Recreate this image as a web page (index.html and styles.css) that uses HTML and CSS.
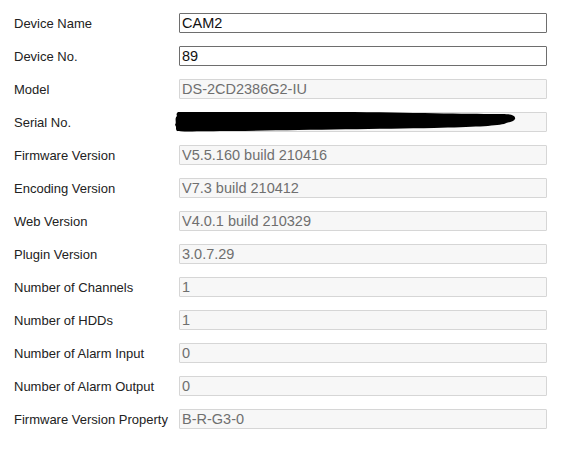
FILE: index.html
```html
<!DOCTYPE html>
<html>
<head>
<meta charset="utf-8">
<link rel="stylesheet" href="styles.css">
</head>
<body>
<div class="form">
  <div class="row"><span class="label">Device Name</span><div class="field"><input class="inp" value="CAM2"></div></div>
  <div class="row"><span class="label">Device No.</span><div class="field"><input class="inp" value="89"></div></div>
  <div class="row"><span class="label">Model</span><div class="field"><input class="inp" value="DS-2CD2386G2-IU" disabled></div></div>
  <div class="row"><span class="label">Serial No.</span><div class="field"><input class="inp" value="" disabled>
    <svg class="redact" width="345" height="22" viewBox="0 0 345 22"><path d="M4 1 L180 1 C250 2 300 3 328 3 C338 3 342 5 341 8 C340 11 334 11 330 13 C320 15 300 16 260 17 C200 18 120 19 60 20 C30 20 10 21 3 20 C1 18 3 16 1 14 C3 11 0 8 3 5 C2 3 3 2 4 1 Z" fill="#000"/></svg>
  </div></div>
  <div class="row"><span class="label">Firmware Version</span><div class="field"><input class="inp" value="V5.5.160 build 210416" disabled></div></div>
  <div class="row"><span class="label">Encoding Version</span><div class="field"><input class="inp" value="V7.3 build 210412" disabled></div></div>
  <div class="row"><span class="label">Web Version</span><div class="field"><input class="inp" value="V4.0.1 build 210329" disabled></div></div>
  <div class="row"><span class="label">Plugin Version</span><div class="field"><input class="inp" value="3.0.7.29" disabled></div></div>
  <div class="row"><span class="label">Number of Channels</span><div class="field"><input class="inp" value="1" disabled></div></div>
  <div class="row"><span class="label">Number of HDDs</span><div class="field"><input class="inp" value="1" disabled></div></div>
  <div class="row"><span class="label">Number of Alarm Input</span><div class="field"><input class="inp" value="0" disabled></div></div>
  <div class="row"><span class="label">Number of Alarm Output</span><div class="field"><input class="inp" value="0" disabled></div></div>
  <div class="row"><span class="label">Firmware Version Property</span><div class="field"><input class="inp" value="B-R-G3-0" disabled></div></div>
</div>
</body>
</html>
```
FILE: styles.css
```css
html, body {
  margin: 0;
  padding: 0;
  background: #fff;
}
.form {
  padding: 13px 0 0 14px;
  display: flex;
  flex-direction: column;
  gap: 13px;
  font-family: "Liberation Sans", Arial, sans-serif;
}
.row {
  display: flex;
  align-items: center;
  height: 20px;
}
.label {
  width: 165px;
  flex: none;
  font-size: 13px;
  line-height: 16px;
  padding-top: 2px;
  color: #222;
}
.field {
  position: relative;
  width: 368px;
  height: 20px;
}
.inp {
  box-sizing: border-box;
  width: 368px;
  height: 20px;
  margin: 0;
  padding: 0 2px;
  border: 1px solid #6e6e6e;
  border-radius: 1px;
  font-family: "Liberation Sans", Arial, sans-serif;
  font-size: 14.5px;
  color: #111;
  background: #fff;
  outline: none;
}
.inp:disabled {
  border-color: #d6d6d6;
  background: #f7f7f7;
  color: #6f6f6f;
}
.redact {
  position: absolute;
  left: -5px;
  top: -1px;
}
```
